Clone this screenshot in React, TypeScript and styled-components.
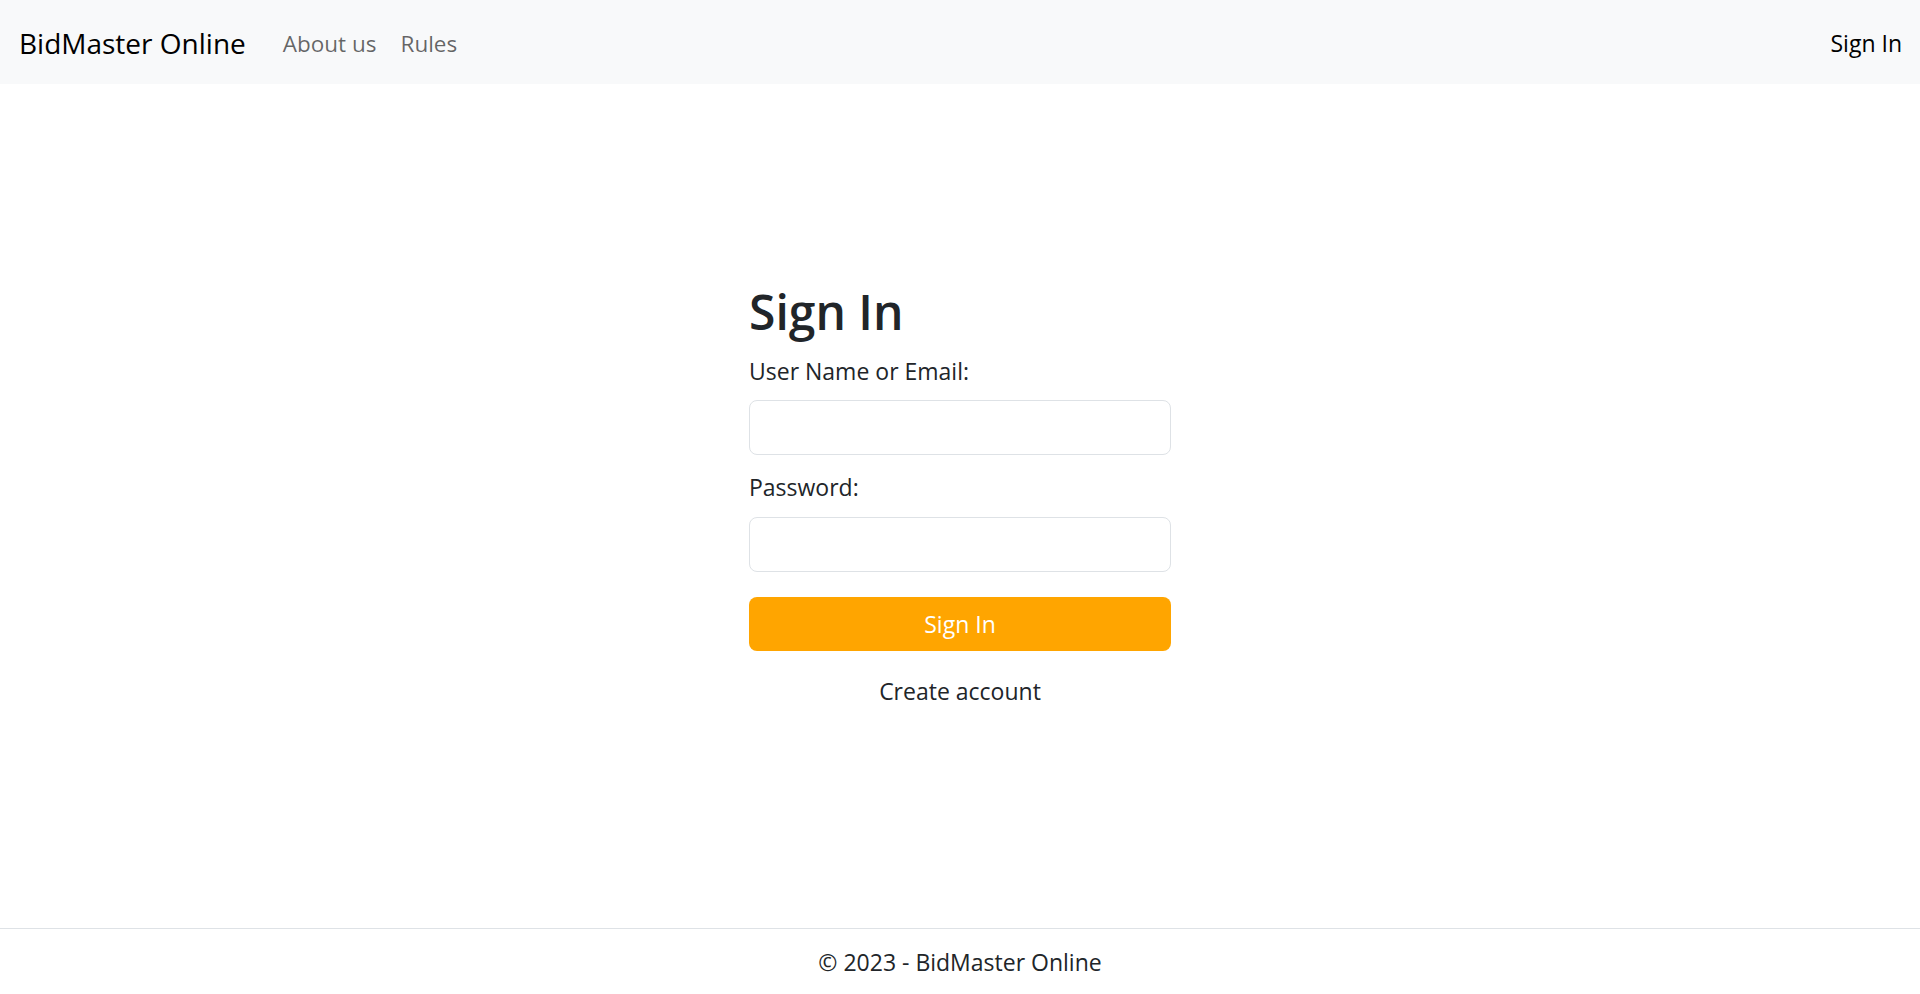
import { createGlobalStyle, styled } from 'styled-components';

const GlobalStyle = createGlobalStyle`
  * {
    box-sizing: border-box;
  }
  body {
    margin: 0;
    font-family: 'Open Sans', 'Noto Sans', sans-serif;
    color: #212529;
    background: #fff;
  }
`;

const App = () => {
  return (
    <Page>
      <GlobalStyle />
      <NavBar>
        <NavLeft>
          <Brand href="#">BidMaster Online</Brand>
          <NavLink href="#">About us</NavLink>
          <NavLink href="#">Rules</NavLink>
        </NavLeft>
        <SignInLink href="#">Sign In</SignInLink>
      </NavBar>
      <Main>
        <Form onSubmit={(e) => e.preventDefault()}>
          <Title>Sign In</Title>
          <Field>
            <Label htmlFor="login">User Name or Email:</Label>
            <Input id="login" type="text" />
          </Field>
          <Field>
            <Label htmlFor="password">Password:</Label>
            <Input id="password" type="password" />
          </Field>
          <SubmitButton type="submit">Sign In</SubmitButton>
          <CreateLink href="#">Create account</CreateLink>
        </Form>
      </Main>
      <Footer>© 2023 - BidMaster Online</Footer>
    </Page>
  );
};

export default App;

const Page = styled.div`
  min-height: 100vh;
  display: flex;
  flex-direction: column;
`;

const NavBar = styled.nav`
  height: 84px;
  background-color: #f8f9fa;
  display: flex;
  align-items: center;
  justify-content: space-between;
  padding: 2px 18px 0 19px;
`;

const NavLeft = styled.div`
  display: flex;
  align-items: center;
`;

const Brand = styled.a`
  font-size: 28px;
  color: #000;
  text-decoration: none;
  margin-right: 37px;
`;

const NavLink = styled.a`
  font-size: 22.5px;
  color: rgba(0, 0, 0, 0.6);
  text-decoration: none;
  margin-right: 24px;
`;

const SignInLink = styled.a`
  font-size: 23px;
  color: #000;
  text-decoration: none;
`;

const Main = styled.main`
  flex: 1;
  display: flex;
  justify-content: center;
  padding-top: 199px;
`;

const Form = styled.form`
  width: 422px;
  display: flex;
  flex-direction: column;
`;

const Title = styled.h1`
  margin: 0 0 13px;
  font-size: 48px;
  font-weight: 600;
  line-height: 1.2;
`;

const Field = styled.div`
  display: flex;
  flex-direction: column;
  margin-bottom: 15px;
`;

const Label = styled.label`
  font-size: 23px;
  line-height: 1.5;
  margin-bottom: 12px;
`;

const Input = styled.input`
  height: 55px;
  border: 1px solid #dee2e6;
  border-radius: 8px;
  padding: 0 15px;
  font-size: 20px;
  outline: none;
`;

const SubmitButton = styled.button`
  height: 54px;
  margin-top: 10px;
  border: none;
  border-radius: 8px;
  background-color: #ffa500;
  color: #fff;
  font-family: inherit;
  font-size: 23px;
  cursor: pointer;
`;

const CreateLink = styled.a`
  margin-top: 23px;
  align-self: center;
  font-size: 23px;
  line-height: 1.5;
  color: #212529;
  text-decoration: none;
`;

const Footer = styled.footer`
  border-top: 1px solid #dee2e6;
  height: 66px;
  display: flex;
  align-items: center;
  justify-content: center;
  font-size: 23px;
`;
